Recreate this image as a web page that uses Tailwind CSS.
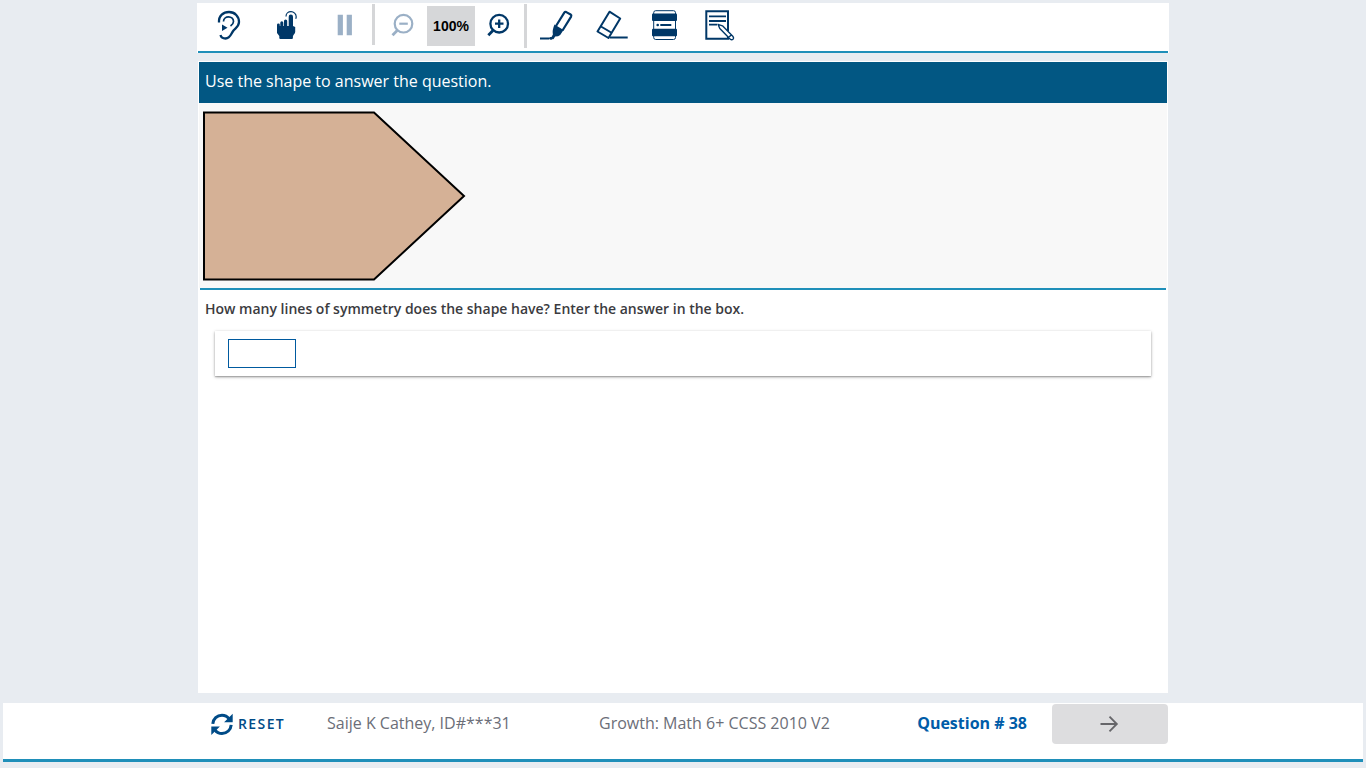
<!DOCTYPE html>
<html lang="en">
<head>
<meta charset="utf-8">
<meta name="viewport" content="width=device-width, initial-scale=1">
<title>Growth: Math 6+ CCSS 2010 V2</title>
<script src="https://cdn.jsdelivr.net/npm/@tailwindcss/browser@4"></script>
</head>
<body class="flex min-h-screen flex-col bg-[#e8ecf1] pt-[3px] pb-[6px] font-['Open_Sans',sans-serif]">
  <header class="mx-auto w-full max-w-[972px] bg-white px-px text-[#003767]">
    <div role="toolbar" aria-label="Test tools" class="flex h-12 items-start">
      <button type="button" aria-label="Read aloud" class="flex h-11 w-[58px] items-center justify-center">
        <svg class="size-8" viewBox="0 0 32 32" fill="none" stroke="currentColor">
          <path stroke-width="2.300" d="M8 13.500C7.500 6.500 12.500 3 18 3c6 0 10 4.500 10 10 0 4.500-3.500 6-5.500 8.500-2.500 3-3 8-8 8-2.500 0-4.500-1.500-5-3.500"/>
          <path stroke-width="1.700" d="M12.500 12.500c0-3 2.500-4.700 5-4.700 3 0 5 2.200 5 4.700 0 2-1.500 3.500-3 4.500"/>
          <path fill="currentColor" stroke="none" d="M11 15.500l5.500 3.200-5.500 3.300z"/>
        </svg>
      </button>
      <button type="button" aria-label="Touch to read" class="flex h-11 w-[58px] items-center justify-center">
        <svg class="size-8" viewBox="0 0 32 32" fill="currentColor">
          <path d="M19.700 7.700a2.100 2.100 0 0 1 4.300 0V17l2.200 1v5c0 1.500-2.300 3-2.300 4.500V29q0 1-1 1H11.300q-1 0-1-1v-2L8 24v-8.200a1.300 1.300 0 0 1 2.800 0V17h.5v-3.200a1.400 1.400 0 0 1 3 0V17h.7v-5a1.500 1.500 0 0 1 3.200 0v5h1.500z"/>
          <path fill="none" stroke="currentColor" stroke-width="1.200" d="M17 7.500c0-3 2.300-4.800 5-4.800s5.200 2.200 5.200 5.100q0 1-.5 2"/>
        </svg>
      </button>
      <button type="button" aria-label="Pause" disabled class="flex h-11 w-[58px] items-center justify-center text-[#9bb0c6]">
        <svg class="size-8" viewBox="0 0 32 32" fill="currentColor"><path d="M10.700 5.700h5.200v20.500h-5.200zM19.700 5.700h5.200v20.500h-5.200z"/></svg>
      </button>
      <div class="mt-px h-[41px] w-[3px] bg-[#d5d6d8]"></div>
      <button type="button" aria-label="Zoom out" disabled class="flex h-11 w-[52px] items-center justify-center text-[#9bb0c6]">
        <svg class="size-8" viewBox="0 0 32 32" fill="none" stroke="currentColor" stroke-width="2.200"><circle cx="18.500" cy="14.700" r="8.800"/><path d="M14.300 14.700h8.500"/><path stroke-width="2.800" d="M12.200 21.500l-4.700 4.700"/></svg>
      </button>
      <output class="mt-[3px] flex h-10 w-12 items-center justify-center bg-[#d6d7d9] font-['Liberation_Sans',sans-serif] text-sm font-bold text-black">100%</output>
      <button type="button" aria-label="Zoom in" class="flex h-11 w-12 items-center justify-center">
        <svg class="size-8" viewBox="0 0 32 32" fill="none" stroke="currentColor" stroke-width="2.300"><circle cx="16.200" cy="14.700" r="8.800"/><path d="M12 14.700h8.500M16.200 10.400v8.500"/><path stroke-width="2.800" d="M10 21.500l-4.700 4.700"/></svg>
      </button>
      <div class="mt-px mr-[3px] ml-px h-11 w-[3px] bg-[#d5d6d8]"></div>
      <button type="button" aria-label="Highlighter" class="flex h-11 w-[54px] items-center justify-center">
        <svg class="size-9" viewBox="0 0 36 36" fill="none" stroke="currentColor">
          <path stroke-width="2.200" d="M17 19l8.300-13.300q.8-1.200 2-.6l4.300 2.400q1.200.8.500 2.100L23.500 23.500"/>
          <path fill="currentColor" stroke="none" d="M15.500 17.500l9 5.400-3.300 5q-1.700 1.600-5 1.600l-1.700 2.700-2.500-1.300 1.900-3.400q-1-4 1.600-10z"/>
          <path stroke-width="2" d="M1 31.500h9"/>
          <path stroke-width="2.800" stroke-linecap="round" d="M11.500 31.300h1"/>
        </svg>
      </button>
      <button type="button" aria-label="Eraser" class="flex h-11 w-[54px] items-center justify-center">
        <svg class="size-9" viewBox="0 0 36 36" fill="none" stroke="currentColor" stroke-width="2" stroke-linejoin="round">
          <path d="M16.500 4.700l10.700 6.800L15.500 31 4.500 24.500zM8 19.500l11 6.500"/><path d="M17 30.500h17.700"/>
        </svg>
      </button>
      <button type="button" aria-label="Line reader" class="flex h-11 w-[54px] items-center justify-center">
        <svg class="size-9" viewBox="0 0 36 36" fill="currentColor">
          <rect x="6.700" y="3.700" width="21.800" height="28.800" rx="2" fill="none" stroke="currentColor" stroke-width="1"/>
          <rect x="5" y="6.500" width="25" height="7.500" rx="1"/><rect x="5" y="21.800" width="25" height="7.500" rx="1"/>
          <circle cx="10.700" cy="18" r="1.300"/><path d="M13.300 17h11v2h-11z"/>
        </svg>
      </button>
      <button type="button" aria-label="Notepad" class="flex h-11 w-[54px] items-center justify-center">
        <svg class="size-9" viewBox="0 0 36 36" fill="none" stroke="currentColor">
          <path stroke-width="2" d="M27 24V4.300H5.300v27.400H27v-2.500"/>
          <path stroke-width="1.800" d="M8 9.400h17M8 14h17M8 17.600h8"/>
          <path fill="white" stroke-width="1.400" stroke-linejoin="round" d="M17 17.300l4.500 1.500L32 29.500q1.200 1.500 0 2.700-1.300 1.200-2.700 0L18.800 21.600zM27.600 30.500l2.800-2.800"/>
        </svg>
      </button>
    </div>
    <div class="h-[2px] bg-[#1f8fb9]"></div>
  </header>

  <main class="mx-auto mt-2 w-full max-w-[970px] grow bg-white p-px">
    <h1 class="h-[41px] bg-[#025783] px-1.5 text-base leading-[38px] text-white">Use the shape to answer the question.</h1>
    <div class="bg-[#f8f8f8] pt-2 pb-[7px] pl-1">
      <svg class="h-[170px] w-[264px]" viewBox="0 0 264 170" role="img" aria-label="Pentagon with a point on the right">
        <path d="M1 1.500H171L261 85 171 168.500H1z" fill="#d5b196" stroke="black" stroke-width="2"/>
      </svg>
    </div>
    <div class="mx-px h-[2px] bg-[#1f8fb9]"></div>
    <label for="answer" class="block px-1.5 pt-2 text-sm leading-[22px] font-semibold text-[#3b3b40]">How many lines of symmetry does the shape have? Enter the answer in the box.</label>
    <div class="mx-4 mt-[11px] bg-white px-[13px] py-2 shadow-[0_1px_3px_rgba(0,0,0,0.35),0_1px_1px_rgba(0,0,0,0.15)]">
      <input id="answer" type="text" autocomplete="off" class="block h-[29px] w-[68px] border border-[#005a9f] bg-white px-1 text-sm">
    </div>
  </main>

  <footer class="mx-[3px] mt-2.5 border-b-3 border-[#1f8fb9] bg-white">
    <div class="mx-auto flex h-14 w-full max-w-[970px] items-start pt-px text-base leading-[38px] whitespace-nowrap text-[#6b6e78]">
      <button type="button" class="ml-3 flex h-10 w-[117px] items-center gap-1 text-sm font-semibold tracking-widest text-[#004b87]">
        <svg class="size-6" viewBox="0 0 24 24" fill="none" stroke="currentColor" stroke-width="3">
          <path d="M2.800 11.800C3.200 6.800 7 3.200 12 3.200c3 0 5.500 1.400 7.200 3.700M21.200 12.800c-.4 5-4.200 8.700-9.200 8.700-3 0-5.500-1.400-7.200-3.700"/>
          <path fill="currentColor" stroke="none" d="M22.700 1.700v8.600h-8.600zM1.300 23v-8.600h8.600z"/>
        </svg>
        RESET
      </button>
      <span class="w-[272px]">Saije K Cathey, ID#***31</span>
      <span>Growth: Math 6+ CCSS 2010 V2</span>
      <strong class="mr-[25px] ml-auto font-bold text-[#005ca8]">Question # 38</strong>
      <button type="button" aria-label="Next question" disabled class="flex h-10 w-[116px] items-center justify-center rounded bg-[#dddddf] text-[#66666a]">
        <svg class="size-6" viewBox="0 0 24 24" fill="none" stroke="currentColor" stroke-width="1.900"><path d="M2.500 12h16.500M11.500 4.700l7.300 7.300-7.300 7.300"/></svg>
      </button>
    </div>
  </footer>
</body>
</html>
